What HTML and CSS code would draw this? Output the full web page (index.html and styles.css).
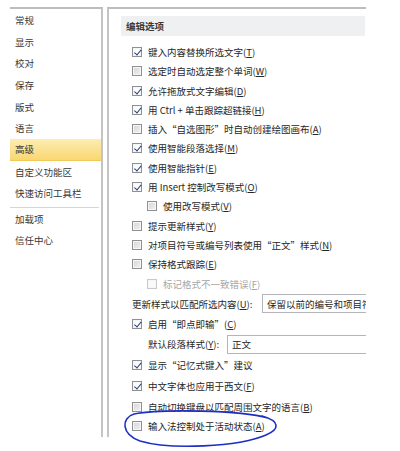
FILE: index.html
```html
<!DOCTYPE html>
<html lang="zh-CN">
<head>
<meta charset="utf-8">
<title>Word 选项 - 高级</title>
<link rel="stylesheet" href="styles.css">
</head>
<body>
<div class="page">
  <nav class="nav">
    <div class="nav-item">常规</div>
    <div class="nav-item">显示</div>
    <div class="nav-item">校对</div>
    <div class="nav-item">保存</div>
    <div class="nav-item">版式</div>
    <div class="nav-item">语言</div>
    <div class="nav-item selected">高级</div>
    <div class="nav-item">自定义功能区</div>
    <div class="nav-item">快速访问工具栏</div>
    <div class="nav-sep"></div>
    <div class="nav-item">加载项</div>
    <div class="nav-item">信任中心</div>
  </nav>
  <section class="panel">
    <div class="section-head">编辑选项</div>
    <div class="rows">
      <div class="row"><span class="cb on"></span><span>键入内容替换所选文字(<u>T</u>)</span></div>
      <div class="row"><span class="cb"></span><span>选定时自动选定整个单词(<u>W</u>)</span></div>
      <div class="row"><span class="cb on"></span><span>允许拖放式文字编辑(<u>D</u>)</span></div>
      <div class="row"><span class="cb on"></span><span>用 Ctrl + 单击跟踪超链接(<u>H</u>)</span></div>
      <div class="row"><span class="cb"></span><span>插入“自选图形”时自动创建绘图画布(<u>A</u>)</span></div>
      <div class="row"><span class="cb on"></span><span>使用智能段落选择(<u>M</u>)</span></div>
      <div class="row"><span class="cb on"></span><span>使用智能指针(<u>E</u>)</span></div>
      <div class="row"><span class="cb on"></span><span>用 Insert 控制改写模式(<u>O</u>)</span></div>
      <div class="row indent"><span class="cb"></span><span>使用改写模式(<u>V</u>)</span></div>
      <div class="row"><span class="cb"></span><span>提示更新样式(<u>Y</u>)</span></div>
      <div class="row"><span class="cb"></span><span>对项目符号或编号列表使用“正文”样式(<u>N</u>)</span></div>
      <div class="row"><span class="cb"></span><span>保持格式跟踪(<u>E</u>)</span></div>
      <div class="row indent disabled"><span class="cb"></span><span>标记格式不一致错误(<u>F</u>)</span></div>
      <div class="row row-select"><span class="sel-label wide">更新样式以匹配所选内容(<u>U</u>):</span><span class="select">保留以前的编号和项目符号样式</span></div>
      <div class="row row-20"><span class="cb on"></span><span>启用“即点即输”(<u>C</u>)</span></div>
      <div class="row row-20 indent-label"><span class="sel-label narrow">默认段落样式(<u>Y</u>):</span><span class="select">正文</span></div>
      <div class="row row-21"><span class="cb on"></span><span>显示“记忆式键入”建议</span></div>
      <div class="row row-22"><span class="cb on"></span><span>中文字体也应用于西文(<u>F</u>)</span></div>
      <div class="row row-19"><span class="cb"></span><span>自动切换键盘以匹配周围文字的语言(<u>B</u>)</span></div>
      <div class="row row-19"><span class="cb"></span><span>输入法控制处于活动状态(<u>A</u>)</span></div>
    </div>
  </section>
  <svg class="circle" width="400" height="451" viewBox="0 0 400 451" aria-hidden="true">
    <path d="M268 418 C240 410 160 409 134 414 C121 418 121 434 140 441 C170 450 238 447 266 435 C280 429 280 421 262 416" fill="none" stroke="#1c2fc4" stroke-width="1.6" stroke-linecap="round"/>
  </svg>
</div>
</body>
</html>
```
FILE: styles.css
```css
* { box-sizing: border-box; }
html, body { margin: 0; padding: 0; background: #fff; }
body {
  font-family: "Noto Sans CJK SC", "Noto Sans", sans-serif;
  font-size: 9.5px;
  color: #262626;
}
.page {
  position: relative;
  width: 400px;
  height: 451px;
  display: flex;
  align-items: flex-start;
  gap: 4px;
  padding: 7px 0 0 10px;
}
.nav {
  width: 93px;
  height: 430px;
  border-top: 2px solid #bdbdbd;
  border-right: 2px solid #c4c4c4;
}
.nav-item {
  height: 21.7px;
  display: flex;
  align-items: center;
  padding-left: 5px;
  color: #383838;
}
.nav-item.selected {
  background: linear-gradient(#fdedb2, #f9d772);
  border-bottom: 1px solid #efc95a;
}
.nav-sep {
  height: 1px;
  margin: 2.7px 2px 0 0;
  background: #d6d6d6;
}
.panel {
  width: 259px;
  height: 430px;
  border-top: 2px solid #bdbdbd;
  border-left: 2px solid #c4c4c4;
  overflow: hidden;
}
.section-head {
  margin: 7px 0 0 12px;
  height: 20px;
  width: 244px;
  padding-left: 5px;
  display: flex;
  align-items: center;
  background: #eff0f2;
  font-weight: 600;
  color: #3a3a3a;
}
.rows { margin-top: 6.35px; }
.row {
  height: 19.3px;
  display: flex;
  align-items: center;
  padding-left: 23px;
  white-space: nowrap;
}
.row.indent { padding-left: 38px; }
.row.indent-label { padding-left: 39px; }
.row-select { height: 21px; }
.row-20 { height: 20px; }
.row-21 { height: 21px; }
.row-22 { height: 22px; }
.row-19 { height: 19px; }
u { text-decoration: underline; text-underline-offset: 1px; }
.cb {
  flex: none;
  width: 10px;
  height: 10px;
  margin-right: 6px;
  border: 1px solid #8e9092;
  background: linear-gradient(135deg, #d6d6d6, #f1f1f1);
  box-shadow: inset 0 0 0 1px #f6f6f6;
  position: relative;
}
.cb.on {
  background: #fbfbfb;
}
.cb.on::after {
  content: "";
  position: absolute;
  left: 2.5px;
  top: 0px;
  width: 2.5px;
  height: 5.5px;
  border-right: 1.6px solid #27407a;
  border-bottom: 1.6px solid #27407a;
  transform: rotate(40deg);
}
.disabled { color: #a6a6a6; }
.disabled .cb {
  border-color: #c9c9c9;
  background: #fafafa;
}
.sel-label { flex: none; }
.sel-label.wide { width: 130px; }
.sel-label.narrow { width: 79px; }
.select {
  flex: none;
  width: 160px;
  height: 19px;
  border: 1px solid #b3b5b9;
  background: #fff;
  display: flex;
  align-items: center;
  padding-left: 4px;
  overflow: hidden;
}
.circle {
  position: absolute;
  left: 0;
  top: 0;
  pointer-events: none;
}
```
